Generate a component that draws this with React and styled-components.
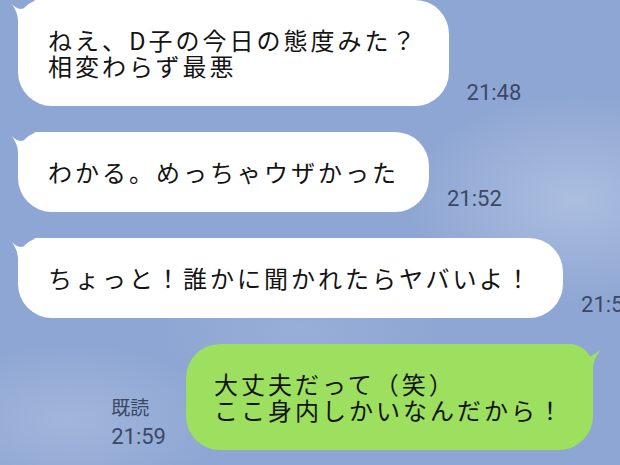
import styled, { createGlobalStyle } from "styled-components";

const GlobalStyle = createGlobalStyle`
  html, body {
    margin: 0;
    padding: 0;
    overflow: hidden;
  }
`;

const MESSAGES = [
  { id: 1, lines: ["ねえ、D子の今日の態度みた？", "相変わらず最悪"], time: "21:48" },
  { id: 2, lines: ["わかる。めっちゃウザかった"], time: "21:52" },
  { id: 3, lines: ["ちょっと！誰かに聞かれたらヤバいよ！"], time: "21:52" },
];

function Tail({ side }) {
  if (side === "right") {
    return (
      <TailSvg $side="right" width="44" height="36" viewBox="0 0 44 36">
        <path d="M31 0 C26 8 21 13 16 13 C10 12 5 8 1 4 C6 10 10 17 10 25 L10 36 L44 36 L44 0 Z" />
      </TailSvg>
    );
  }
  return (
    <TailSvg $side="left" width="40" height="34" viewBox="0 0 40 34">
      <path d="M25 0 C21 6 15 9 10 9 C7 8.5 4 6.5 2 4 C5 9 8 14 8 21 L8 34 L40 34 L40 0 Z" />
    </TailSvg>
  );
}

function App() {
  return (
    <>
      <GlobalStyle />
      <Screen>
        {MESSAGES.map((m) => (
          <Row key={m.id}>
            <Bubble>
              <Tail side="left" />
              {m.lines.map((l, i) => (
                <Line key={i}>{l}</Line>
              ))}
            </Bubble>
            <Time>{m.time}</Time>
          </Row>
        ))}

        <Row $mine>
          <Meta>
            <Read>既読</Read>
            <Time>21:59</Time>
          </Meta>
          <Bubble $mine>
            <Tail side="right" />
            <Line>大丈夫だって（笑）</Line>
            <Line>ここ身内しかいなんだから！</Line>
          </Bubble>
        </Row>
      </Screen>
    </>
  );
}

const Screen = styled.div`
  width: 620px;
  height: 465px;
  overflow: hidden;
  box-sizing: border-box;
  display: flex;
  flex-direction: column;
  row-gap: 26px;
  background:
    radial-gradient(ellipse 240px 150px at 575px 200px, rgba(196, 210, 234, 0.55), transparent 70%),
    radial-gradient(ellipse 220px 110px at 70px 420px, rgba(180, 198, 228, 0.5), transparent 70%),
    radial-gradient(ellipse 200px 90px at 300px 330px, rgba(170, 190, 225, 0.35), transparent 70%),
    #8ea6d3;
`;

const Row = styled.div`
  display: flex;
  align-items: flex-end;
  justify-content: ${(p) => (p.$mine ? "flex-end" : "flex-start")};
  column-gap: ${(p) => (p.$mine ? "20px" : "18px")};
  padding: ${(p) => (p.$mine ? "0 27px 0 0" : "0 0 0 18px")};
`;

const Bubble = styled.div`
  position: relative;
  flex-shrink: 0;
  padding: ${(p) => (p.$mine ? "27px 28px 27px 28px" : "27px 30px 27px 30px")};
  background: ${(p) => (p.$mine ? "#9de05f" : "#ffffff")};
  border-radius: ${(p) => (p.$mine ? "34px 24px 34px 34px" : "24px 34px 34px 34px")};
  font-family: "Noto Sans CJK JP", "Noto Sans", sans-serif;
  font-size: 24px;
  letter-spacing: 3px;
  line-height: 26px;
  color: #141414;
  white-space: nowrap;
`;

const Line = styled.div`
  position: relative;
`;

const TailSvg = styled.svg`
  position: absolute;
  top: 0;
  ${(p) => (p.$side === "right" ? "right: -10px; transform: scaleX(-1);" : "left: -8px;")}
  fill: ${(p) => (p.$side === "right" ? "#9de05f" : "#ffffff")};
`;

const Meta = styled.div`
  display: flex;
  flex-direction: column;
  align-items: flex-start;
  row-gap: 7px;
  padding-bottom: 0;
`;

const Time = styled.span`
  flex-shrink: 0;
  font-family: Roboto, "Liberation Sans", sans-serif;
  font-size: 22px;
  line-height: 24px;
  color: #3b4866;
  padding-bottom: 1px;
`;

const Read = styled.span`
  font-family: "Noto Sans CJK JP", sans-serif;
  font-size: 19px;
  line-height: 22px;
  color: #3b4866;
`;

export default App;
